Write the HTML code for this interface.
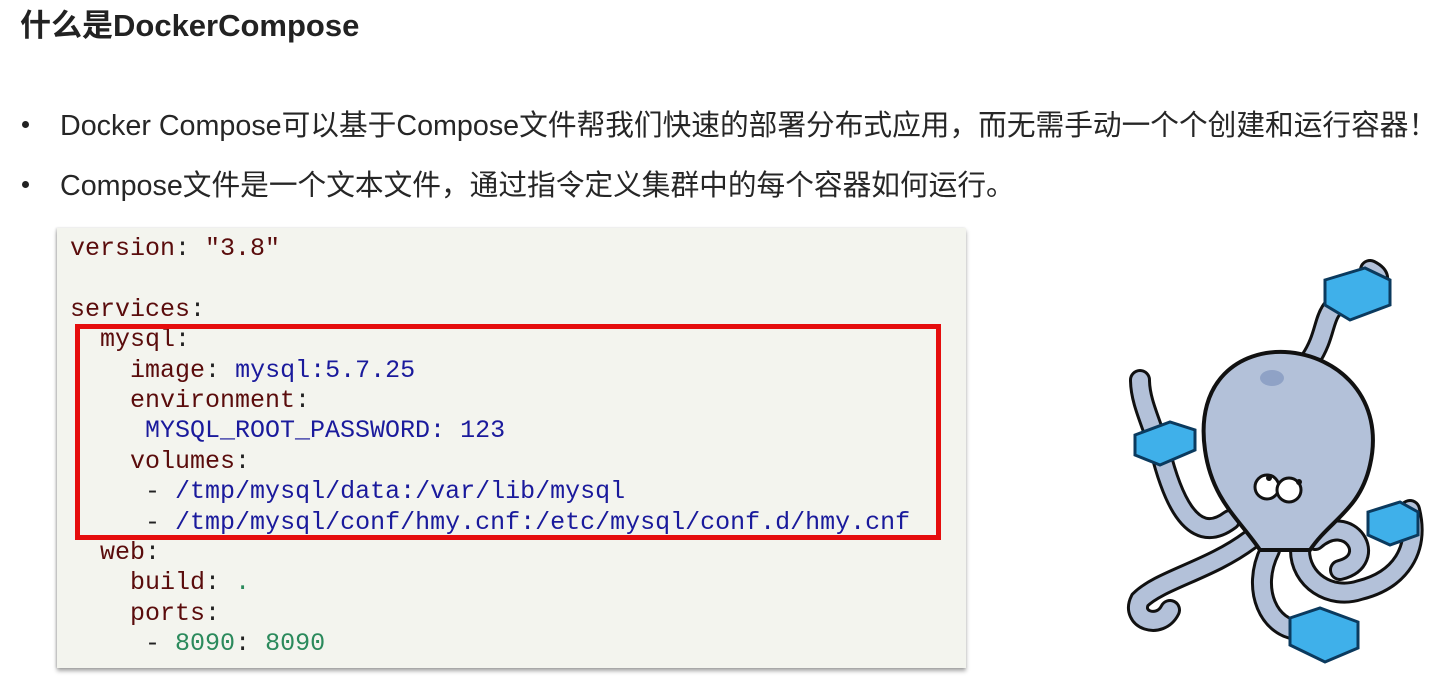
<!DOCTYPE html>
<html><head><meta charset="utf-8"><style>
body{margin:0;width:1431px;height:695px;background:#fff;position:relative;overflow:hidden;font-family:"Liberation Sans","Noto Sans CJK SC",sans-serif;color:#222}
.t{position:absolute;left:20px;top:0px;font-size:31px;font-weight:bold;white-space:nowrap}
.b{position:absolute;left:60px;font-size:28.7px;white-space:nowrap;color:#262626}
.d{position:absolute;left:22px;width:7px;height:7px;border-radius:50%;background:#222}
.code{position:absolute;left:57px;top:228px;width:909px;height:440px;background:#f3f4ee;box-shadow:0 3px 4px rgba(0,0,0,.35),-1px 0 2px rgba(0,0,0,.15)}
pre{position:absolute;left:70px;top:234px;margin:0;font-family:"Liberation Mono",monospace;font-size:25px;line-height:30.4px;color:#5a0c0c}
.v{color:#1a1a9c}.g{color:#2b8a5c}.p{color:#222}
.red{position:absolute;left:75px;top:324px;width:856px;height:206px;border:5px solid #e50d0d}
</style></head><body>
<div class="t">什么是DockerCompose</div>
<div class="d" style="top:121px"></div>
<div class="b" style="top:103px">Docker Compose可以基于Compose文件帮我们快速的部署分布式应用，而无需手动一个个创建和运行容器！</div>
<div class="d" style="top:181px"></div>
<div class="b" style="top:163px">Compose文件是一个文本文件，通过指令定义集群中的每个容器如何运行。</div>
<div class="code"></div>
<pre>version<span class="p">:</span> "3.8"

services<span class="p">:</span>
  mysql<span class="p">:</span>
    image<span class="p">:</span> <span class="v">mysql:5.7.25</span>
    environment<span class="p">:</span>
     <span class="v">MYSQL_ROOT_PASSWORD: 123</span>
    volumes<span class="p">:</span>
     <span class="p">-</span> <span class="v">/tmp/mysql/data:/var/lib/mysql</span>
     <span class="p">-</span> <span class="v">/tmp/mysql/conf/hmy.cnf:/etc/mysql/conf.d/hmy.cnf</span>
  web<span class="p">:</span>
    build<span class="p">:</span> <span class="g">.</span>
    ports<span class="p">:</span>
     <span class="p">-</span> <span class="g">8090</span><span class="p">:</span> <span class="g">8090</span></pre>
<div class="red"></div>
<svg style="position:absolute;left:1100px;top:250px" width="331" height="420" viewBox="0 0 331 420">
<g fill="none" stroke="#111" stroke-width="22" stroke-linecap="round">
<path d="M210 110 C230 80 220 60 245 50 C270 40 290 30 270 20"/>
<path d="M130 270 C90 300 70 240 60 200 C50 170 40 150 40 130"/>
<path d="M150 290 C110 320 60 330 40 350 C30 370 60 380 70 360"/>
<path d="M170 300 C150 340 170 380 200 380"/>
<path d="M200 300 C200 330 230 350 260 340 C300 330 320 300 310 260"/>
<path d="M215 290 C250 260 280 310 240 320"/>
</g>
<g fill="none" stroke="#b3c1d9" stroke-width="16" stroke-linecap="round">
<path d="M210 110 C230 80 220 60 245 50 C270 40 290 30 270 20"/>
<path d="M130 270 C90 300 70 240 60 200 C50 170 40 150 40 130"/>
<path d="M150 290 C110 320 60 330 40 350 C30 370 60 380 70 360"/>
<path d="M170 300 C150 340 170 380 200 380"/>
<path d="M200 300 C200 330 230 350 260 340 C300 330 320 300 310 260"/>
<path d="M215 290 C250 260 280 310 240 320"/>
</g>
<path d="M105 200 C95 130 140 100 185 102 C240 105 285 150 270 215 C260 260 230 270 210 300 L160 300 C140 270 112 250 105 200Z" fill="#b3c1d9" stroke="#111" stroke-width="4"/>
<ellipse cx="172" cy="128" rx="12" ry="8" fill="#8fa2c6"/>
<circle cx="167" cy="237" r="12" fill="#fff" stroke="#111" stroke-width="3"/>
<circle cx="189" cy="240" r="12" fill="#fff" stroke="#111" stroke-width="3"/>
<circle cx="169" cy="228" r="3" fill="#111"/><circle cx="199" cy="232" r="3" fill="#111"/>
<g stroke="#0b3a5e" stroke-width="3">
<path d="M225 30 L265 18 L290 30 L290 55 L250 70 L225 55Z" fill="#3fb0ea"/>
<path d="M35 185 L70 172 L95 180 L95 200 L60 215 L35 205Z" fill="#3fb0ea"/>
<path d="M268 262 L300 252 L318 262 L318 285 L290 295 L268 285Z" fill="#3fb0ea"/>
<path d="M190 368 L220 358 L258 372 L258 398 L225 412 L190 395Z" fill="#3fb0ea"/>
</g>
</svg>
</body></html>
